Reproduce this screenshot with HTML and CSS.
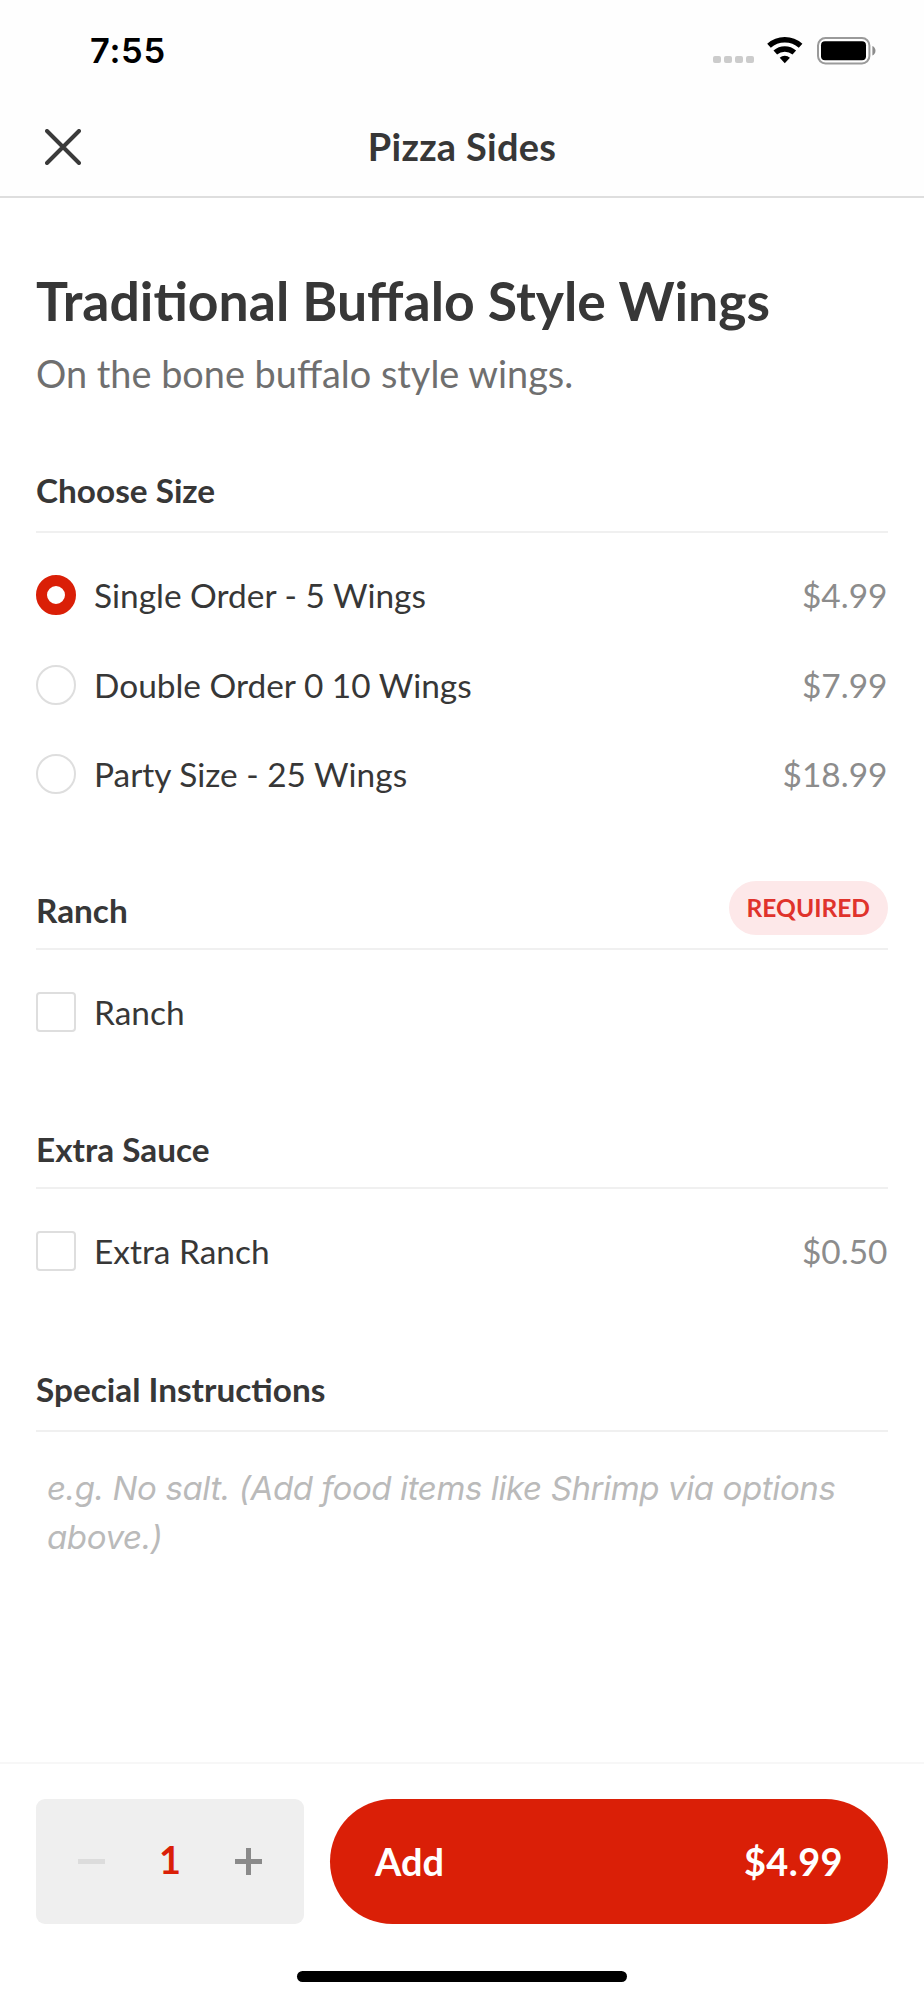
FILE: index.html
```html
<!DOCTYPE html>
<html lang="en">
<head>
<meta charset="utf-8">
<title>Pizza Sides</title>
<link rel="stylesheet" href="styles.css">
</head>
<body>
<div class="screen">
  <header class="top">
    <div class="status">
      <span class="time">7:55</span>
      <div class="status-icons">
        <span class="signal"><i></i><i></i><i></i><i></i></span>
        <svg class="wifi" width="36" height="27" viewBox="0 0 36 27" fill="none" stroke="#000" stroke-width="5.4">
          <path d="M2 8.8A23.6 23.6 0 0 1 33.6 8.8"/>
          <path d="M8.3 15.6A14.3 14.3 0 0 1 27.3 15.6"/>
          <path d="M17.8 26.3L12.7 20.7A7.7 7.7 0 0 1 22.9 20.7Z" fill="#000" stroke="none"/>
        </svg>
        <svg class="battery" width="60" height="28" viewBox="0 0 60 28">
          <rect x="1" y="1" width="51.4" height="25.4" rx="7.5" fill="none" stroke="#9a9a9a" stroke-width="2"/>
          <rect x="4" y="4.3" width="45" height="19" rx="4" fill="#000"/>
          <path d="M55.4 9C59.5 10.500 59.500 17 55.400 18.500Z" fill="#8c8c8c"/>
        </svg>
      </div>
    </div>
    <div class="nav">
      <svg class="close" width="36" height="36" viewBox="0 0 36 36" stroke="#3a3a3a" stroke-width="4" stroke-linecap="round">
        <path d="M2 2L34 34M34 2L2 34"/>
      </svg>
      <h1 class="nav-title">Pizza Sides</h1>
    </div>
  </header>

  <main class="content">
    <h2 class="item-name">Traditional Buffalo Style Wings</h2>
    <p class="item-desc">On the bone buffalo style wings.</p>

    <section class="group group-first">
      <div class="group-head head-tall"><h3>Choose Size</h3></div>
      <div class="options">
        <div class="option"><span class="radio radio-on"></span><span class="label">Single Order - 5 Wings</span><span class="price">$4.99</span></div>
        <div class="option"><span class="radio"></span><span class="label">Double Order 0 10 Wings</span><span class="price">$7.99</span></div>
        <div class="option"><span class="radio"></span><span class="label">Party Size - 25 Wings</span><span class="price">$18.99</span></div>
      </div>
    </section>

    <section class="group">
      <div class="group-head"><h3>Ranch</h3><span class="badge">REQUIRED</span></div>
      <div class="options">
        <div class="option"><span class="check"></span><span class="label">Ranch</span></div>
      </div>
    </section>

    <section class="group">
      <div class="group-head"><h3>Extra Sauce</h3></div>
      <div class="options">
        <div class="option"><span class="check"></span><span class="label">Extra Ranch</span><span class="price">$0.50</span></div>
      </div>
    </section>

    <section class="group">
      <div class="group-head head-tall"><h3>Special Instructions</h3></div>
      <p class="notes">e.g. No salt. (Add food items like Shrimp via options above.)</p>
    </section>
  </main>

  <footer class="bottom">
    <div class="actions">
      <div class="stepper">
        <svg width="27" height="27" viewBox="0 0 27 27"><path d="M0 11h27v5H0z" fill="#dcdcdc"/></svg>
        <span class="count">1</span>
        <svg width="27" height="27" viewBox="0 0 27 27"><path d="M0 11h27v5H0zM11 0h5v27h-5z" fill="#8a8a8a"/></svg>
      </div>
      <div class="add"><span>Add</span><span class="total">$4.99</span></div>
    </div>
    <div class="home"></div>
  </footer>
</div>
</body>
</html>
```
FILE: styles.css
```css
* { box-sizing: border-box; margin: 0; padding: 0; }

body {
  background: #fff;
  color: #373737;
  font-family: Lato, "Liberation Sans", sans-serif;
}

.screen {
  width: 924px;
  height: 2000px;
  display: flex;
  flex-direction: column;
  overflow: hidden;
}

.top {
  flex: none;
  height: 198px;
  background: #fefefe;
  border-bottom: 2px solid #dedede;
}

.status {
  display: flex;
  justify-content: space-between;
  height: 98px;
  padding: 30px 47px 0 90px;
}

.time {
  font: 600 34.5px/42px Inter, sans-serif;
  color: #000;
  letter-spacing: 0.7px;
}

.status-icons { display: flex; padding-top: 6.5px; height: 34px; }
.signal { display: flex; gap: 3.6px; align-items: flex-end; margin-right: 13px; padding-bottom: 0.8px; }
.signal i { width: 7.5px; height: 7.5px; border-radius: 2px; background: #ccc; }
.wifi { margin-right: 14.2px; }

.nav {
  display: grid;
  grid-template-columns: 1fr auto 1fr;
  align-items: center;
  height: 97px;
  padding-left: 44.5px;
}

.nav-title {
  font-size: 37.95px;
  line-height: 46px;
  margin-left: -44.5px;
  letter-spacing: 0.3px;
}

.content { flex: none; height: 1564px; padding: 70px 36px 0; }

.item-name { font-size: 53.5px; line-height: 64px; }

.item-desc {
  margin-top: 19px;
  font-size: 37.87px;
  line-height: 46px;
  color: #6f6f6f;
}

.group { margin-top: 63.7px; }
.group-first { margin-top: 64px; }

.group-head {
  display: flex;
  justify-content: space-between;
  align-items: flex-end;
  height: 68px;
  padding-bottom: 18px;
  border-bottom: 2px solid #f0f0f0;
}

.head-tall { height: 72px; padding-bottom: 21.3px; }
.group:last-child { margin-top: 64.7px; }

.group-head h3 { font-size: 33.35px; line-height: 40px; }

.badge {
  height: 54px;
  margin-bottom: -5px;
  padding: 0 18px;
  border-radius: 27px;
  background: #fde8e9;
  color: #e0332c;
  font-size: 24.55px;
  font-weight: 700;
  line-height: 54px;
}

.options { padding-top: 17.6px; }

.option {
  display: flex;
  align-items: center;
  gap: 18px;
  height: 89.3px;
  font-size: 33.43px;
  line-height: 40px;
}

.radio, .check {
  flex: none;
  width: 40px;
  height: 40px;
  border: 2px solid #dedede;
  background: #fff;
}

.radio { border-radius: 50%; }
.radio-on { border: 11px solid #da1f07; }
.check { border-radius: 4px; }
.label { flex: 1; }
.price { color: #8c8c8c; padding-right: 0.6px; }

.notes {
  padding: 32px 20px 0 11px;
  font: italic 400 33px/49px Inter, sans-serif;
  letter-spacing: -0.38px;
  color: #bababa;
}

.bottom {
  flex: 1;
  border-top: 2px solid #f7f7f7;
  padding: 35px 36px 0;
}

.actions { display: flex; gap: 26px; height: 125px; }

.stepper {
  display: flex;
  align-items: center;
  justify-content: space-between;
  width: 268px;
  padding: 0 42px;
  border-radius: 9px;
  background: #efefef;
}

.count {
  padding-bottom: 3px;
  font-size: 37.95px;
  font-weight: 700;
  line-height: 46px;
  color: #da1f07;
}

.add {
  flex: 1;
  display: flex;
  align-items: center;
  justify-content: space-between;
  padding: 0 45px;
  border-radius: 63px;
  background: #da1f07;
  color: #fff;
  font-size: 37.95px;
  font-weight: 700;
  line-height: 46px;
}

.total { letter-spacing: 0.4px; }

.home {
  width: 330px;
  height: 11.5px;
  margin: 46.5px auto 0;
  border-radius: 6px;
  background: #000;
}
```
